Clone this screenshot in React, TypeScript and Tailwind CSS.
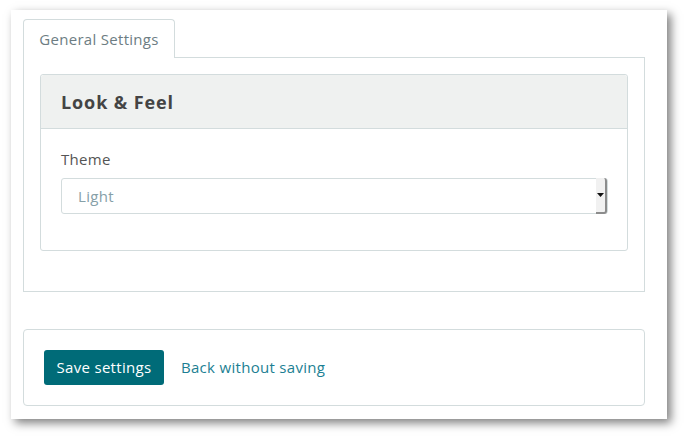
export default function App() {
  return (
    <div className="h-[438px] w-[687px] bg-white pl-[11px] pt-[10px] font-['Open_Sans',sans-serif] tracking-[0.3px]">
      <div className="flex h-[409px] w-[656px] flex-col bg-white px-3 pt-[9px] shadow-[4px_4px_9px_rgba(0,0,0,0.5)]">
        {/* tabs */}
        <div className="flex">
          <div className="relative z-10 -mb-px flex h-[39px] w-[152px] items-center justify-center rounded-t-[4px] border border-b-0 border-[#d3dcdd] bg-white pt-px text-[15px] text-[#6d7d83]">
            General Settings
          </div>
        </div>
        <div className="h-[235px] w-[622px] border border-[#d3dcdd] px-4 pt-4">
          <div className="h-[177px] rounded-[3px] border border-[#d3dcdd]">
            <div className="flex h-[54px] items-center rounded-t-[3px] border-b border-[#d3dcdd] bg-[#eff1f0] px-5 pt-px text-[18px] font-bold tracking-[0.9px] text-[#444]">
              Look &amp; Feel
            </div>
            <div className="px-5 pt-[20px]">
              <div className="text-[15px] leading-5 text-[#555]">Theme</div>
              <div className="mt-[9px] flex h-[36px] w-[547px] items-stretch rounded-[3px] border border-[#d3dcdd] bg-white">
                <div className="flex flex-1 items-center px-4 text-[15px] text-[#86a0a8]">Light</div>
                <div className="my-[-1px] flex w-[11px] items-center justify-center rounded-r-[3px] border-r-2 border-b-2 border-[#8c8c8c] bg-[#f1f1f1]">
                  <svg width="7" height="4" viewBox="0 0 7 4">
                    <path d="M0 0h7L3.5 4z" fill="#111" />
                  </svg>
                </div>
              </div>
            </div>
          </div>
        </div>
        <div className="mt-[37px] flex h-[77px] w-[622px] items-center gap-[17px] rounded-[4px] border border-[#d3dcdd] px-5">
          <button className="h-[35px] w-[120px] rounded-[3px] bg-[#006b78] text-[15px] tracking-[0.3px] text-white">
            Save settings
          </button>
          <a className="text-[15px] text-[#1c7f93]">Back without saving</a>
        </div>
      </div>
    </div>
  );
}
